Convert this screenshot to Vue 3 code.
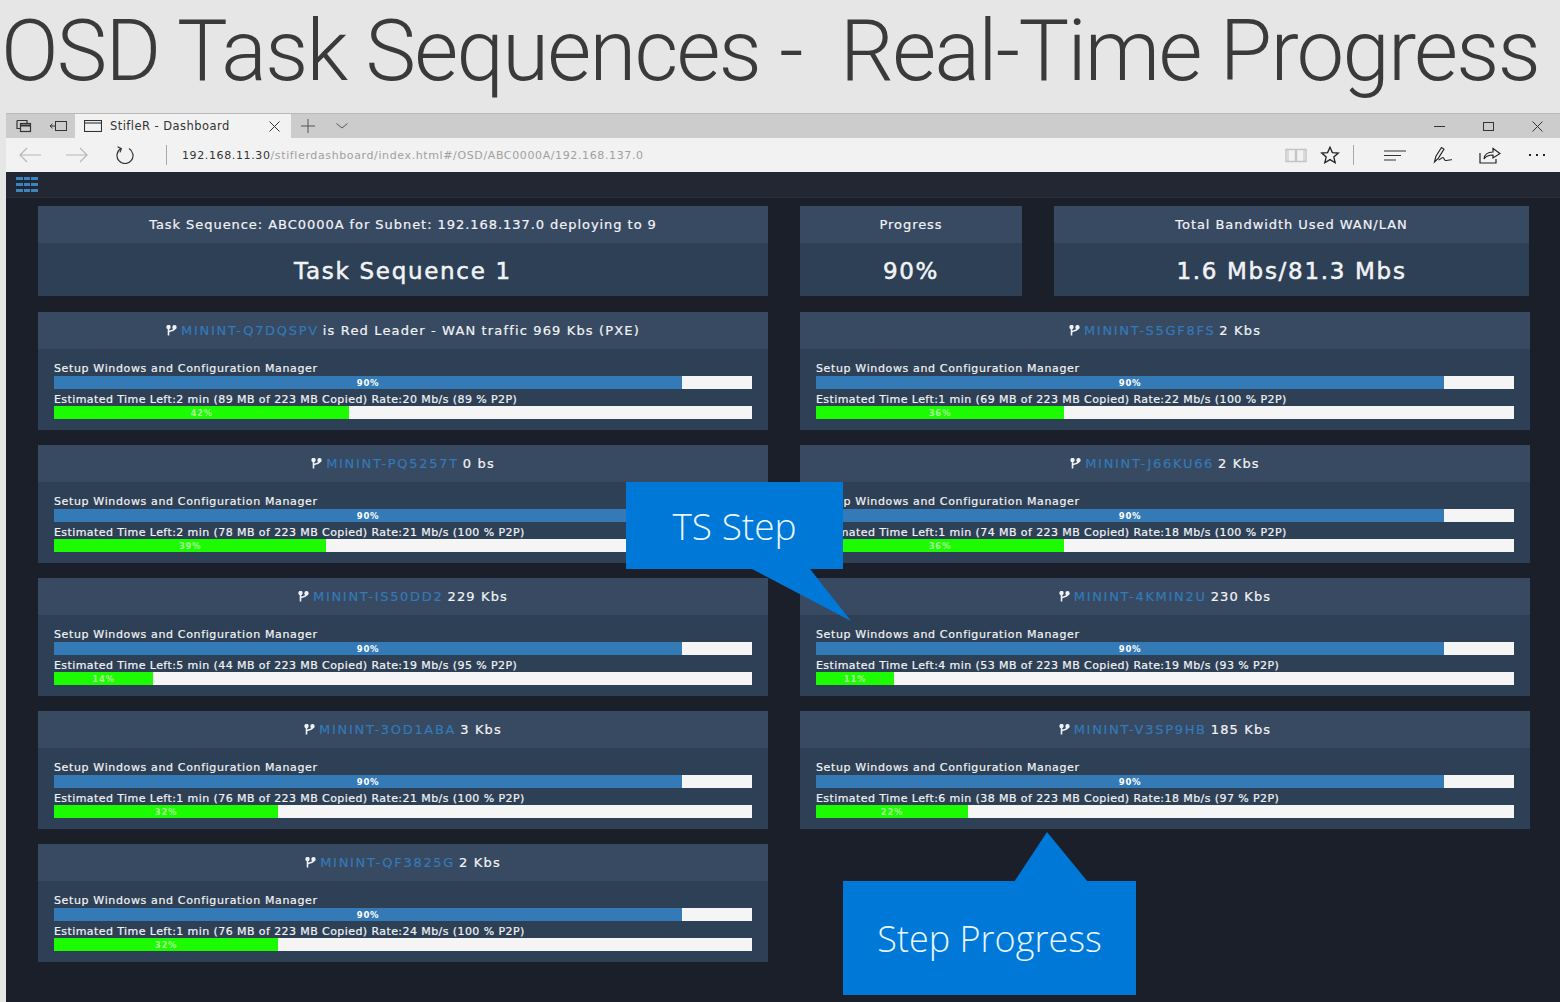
<template>
  <div class="slide">
    <h1 class="slide-title">OSD Task Sequences -&nbsp; Real-Time Progress</h1>

    <div class="browser">
      <div class="tabbar">
        <div class="tabbar-left">
          <svg class="tb-ic" width="16" height="14" viewBox="0 0 16 14" fill="none" stroke="#333" stroke-width="1.2">
            <path d="M1 1.500h10v3M1 1.500v8h3" />
            <rect x="4.500" y="4.500" width="10" height="8" />
            <path d="M4.500 6.500h10" stroke-width="2" />
          </svg>
          <svg class="tb-ic" width="18" height="12" viewBox="0 0 18 12" fill="none" stroke="#333" stroke-width="1">
            <rect x="6.500" y="1.500" width="11" height="9" />
            <path d="M6 6H1M3.500 3.800 1 6l2.500 2.200" />
          </svg>
        </div>
        <div class="tab">
          <svg width="18" height="12" viewBox="0 0 18 12" fill="none" stroke="#333" stroke-width="1.1">
            <rect x="0.500" y="0.500" width="17" height="11" />
            <path d="M0.500 3h17" />
          </svg>
          <span class="tab-title">StifleR - Dashboard</span>
          <svg class="tab-close" width="11" height="11" viewBox="0 0 11 11" stroke="#333" stroke-width="1">
            <path d="M0.500 0.500l10 10M10.500 0.500l-10 10" />
          </svg>
        </div>
        <svg class="tab-plus" width="14" height="14" viewBox="0 0 14 14" stroke="#555" stroke-width="1">
          <path d="M7 0v14M0 7h14" />
        </svg>
        <svg class="tab-more" width="12" height="6" viewBox="0 0 12 6" fill="none" stroke="#555" stroke-width="1">
          <path d="M0.500 0.500 6 5l5.500-4.500" />
        </svg>
        <div class="win-btns">
          <svg width="11" height="11" viewBox="0 0 11 11" stroke="#333" stroke-width="1"><path d="M0 5.500h11" /></svg>
          <svg width="11" height="11" viewBox="0 0 11 11" fill="none" stroke="#333" stroke-width="1"><rect x="0.500" y="1.500" width="10" height="8" /></svg>
          <svg width="11" height="11" viewBox="0 0 11 11" stroke="#333" stroke-width="1"><path d="M0.500 0.500l10 10M10.500 0.500l-10 10" /></svg>
        </div>
      </div>

      <div class="toolbar">
        <svg class="nav-back" width="22" height="16" viewBox="0 0 22 16" fill="none" stroke="#b5b5b5" stroke-width="1.1">
          <path d="M22 8H1M8 1 1 8l7 7" />
        </svg>
        <svg class="nav-fwd" width="22" height="16" viewBox="0 0 22 16" fill="none" stroke="#b5b5b5" stroke-width="1.1">
          <path d="M0 8h21M14 1l7 7-7 7" />
        </svg>
        <svg class="nav-reload" width="22" height="18" viewBox="0 0 22 18" fill="none" stroke="#333" stroke-width="1.2">
          <path d="M7 2.600A8 8 0 1 0 15 2.600" />
          <path d="M3.500 0.800 7.400 2.600 6 6.400" />
        </svg>
        <div class="nav-sep"></div>
        <div class="address"><b>192.168.11.30</b><span>/stiflerdashboard/index.html#/OSD/ABC0000A/192.168.137.0</span></div>
        <div class="tools">
          <svg class="t-book" width="22" height="15" viewBox="0 0 22 15" fill="none" stroke="#c4c4c4" stroke-width="1.4">
            <path d="M1 1.500h9.500v12H1zM11.500 1.500H21v12h-9.500z" />
            <path d="M3 1v13M19 1v13" stroke-width="1" />
          </svg>
          <svg class="t-star" width="20" height="18" viewBox="0 0 20 18" fill="none" stroke="#222" stroke-width="1.300">
            <path d="M10 1.200l2.400 5.400 5.900.5-4.500 3.800 1.400 5.800L10 13.600l-5.200 3.100 1.400-5.800-4.500-3.800 5.900-.5z" />
          </svg>
          <div class="t-sep"></div>
          <svg class="t-hub" width="22" height="11" viewBox="0 0 22 11" stroke="#333" stroke-width="1">
            <path d="M0 1h22M0 5.500h17M0 10h12" />
          </svg>
          <svg class="t-note" width="20" height="18" viewBox="0 0 20 18" fill="none" stroke="#222" stroke-width="1.100">
            <path d="M1.500 16 2.800 10.500 8.500 1.500l2.500 1.600-5.600 9z" />
            <path d="M5.500 14c2-.5 3-2.500 4.500-2.500 1.200 0 .8 3 2.600 3 1.800 0 3-1 6.400-.8" />
          </svg>
          <svg class="t-share" width="22" height="18" viewBox="0 0 22 18" fill="none" stroke="#222" stroke-width="1.200">
            <path d="M1 7v10h16v-4" />
            <path d="M5 13c.5-4.500 4-7 9-7V2.500L21 7.500 14 12V9c-4 0-7 1-9 4z" />
          </svg>
          <div class="t-dots"><i></i><i></i><i></i></div>
        </div>
      </div>

      <div class="appbar">
        <div class="app-grid"><i v-for="n in 9" :key="n"></i></div>
      </div>

      <div class="content">
        <div class="summary">
          <div v-for="s in summary" :key="s.head" class="panel sum-panel" :class="s.cls">
            <div class="sum-head">{{ s.head }}</div>
            <div class="sum-value">{{ s.value }}</div>
          </div>
        </div>

        <div class="clients">
          <div v-for="c in clients" :key="c.name" class="panel client">
            <div class="client-head">
              <svg class="fork" width="11" height="11" viewBox="0 0 11 11" fill="none" stroke="#eef2f6" stroke-width="1.600">
                <path d="M2.500 2v8.500M2.500 7.500c0-2.500 6-1 6-4" />
                <circle cx="2.500" cy="2" r="1.400" fill="#eef2f6" />
                <circle cx="8.500" cy="2.200" r="1.400" fill="#eef2f6" />
              </svg>
              <span class="client-name">{{ c.name }}</span>
              <span>{{ c.note }}</span>
            </div>
            <div class="client-body">
              <div class="bar-label">Setup Windows and Configuration Manager</div>
              <div class="bar">
                <div class="fill fill-blue" style="width: 90%">90%</div>
              </div>
              <div class="bar-label label-2">{{ c.status }}</div>
              <div class="bar">
                <div class="fill fill-green" :style="{ width: c.fill + '%' }">{{ c.pct }}%</div>
              </div>
            </div>
          </div>
        </div>
      </div>
    </div>

    <div class="callout callout-ts">
      <span>TS Step</span>
      <svg class="tail-ts" width="100" height="52" viewBox="0 0 100 52"><path d="M0 0H58L99 52z" fill="#0078d7" /></svg>
    </div>
    <div class="callout callout-step">
      <span>Step Progress</span>
      <svg class="tail-step" width="74" height="50" viewBox="0 0 74 50"><path d="M0 50 33 0l41 50z" fill="#0078d7" /></svg>
    </div>
  </div>
</template>

<script setup>
const summary = [
  { head: 'Task Sequence: ABC0000A for Subnet: 192.168.137.0 deploying to 9', value: 'Task Sequence 1', cls: 'sum-main' },
  { head: 'Progress', value: '90%', cls: 'sum-progress' },
  { head: 'Total Bandwidth Used WAN/LAN', value: '1.6 Mbs/81.3 Mbs', cls: 'sum-band' }
]

const clients = [
  { name: 'MININT-Q7DQSPV', note: 'is Red Leader - WAN traffic 969 Kbs (PXE)', pct: 42, fill: 42.3, status: 'Estimated Time Left:2 min (89 MB of 223 MB Copied) Rate:20 Mb/s (89 % P2P)' },
  { name: 'MININT-S5GF8FS', note: '2 Kbs', pct: 36, fill: 35.5, status: 'Estimated Time Left:1 min (69 MB of 223 MB Copied) Rate:22 Mb/s (100 % P2P)' },
  { name: 'MININT-PQ5257T', note: '0 bs', pct: 39, fill: 39, status: 'Estimated Time Left:2 min (78 MB of 223 MB Copied) Rate:21 Mb/s (100 % P2P)' },
  { name: 'MININT-J66KU66', note: '2 Kbs', pct: 36, fill: 35.5, status: 'Estimated Time Left:1 min (74 MB of 223 MB Copied) Rate:18 Mb/s (100 % P2P)' },
  { name: 'MININT-IS50DD2', note: '229 Kbs', pct: 14, fill: 14.2, status: 'Estimated Time Left:5 min (44 MB of 223 MB Copied) Rate:19 Mb/s (95 % P2P)' },
  { name: 'MININT-4KMIN2U', note: '230 Kbs', pct: 11, fill: 11.2, status: 'Estimated Time Left:4 min (53 MB of 223 MB Copied) Rate:19 Mb/s (93 % P2P)' },
  { name: 'MININT-3OD1ABA', note: '3 Kbs', pct: 32, fill: 32.1, status: 'Estimated Time Left:1 min (76 MB of 223 MB Copied) Rate:21 Mb/s (100 % P2P)' },
  { name: 'MININT-V3SP9HB', note: '185 Kbs', pct: 22, fill: 21.8, status: 'Estimated Time Left:6 min (38 MB of 223 MB Copied) Rate:18 Mb/s (97 % P2P)' },
  { name: 'MININT-QF3825G', note: '2 Kbs', pct: 32, fill: 32.1, status: 'Estimated Time Left:1 min (76 MB of 223 MB Copied) Rate:24 Mb/s (100 % P2P)' }
]
</script>

<style>
html,
body {
  margin: 0;
  background: #e6e6e6;
}
</style>

<style scoped>
.slide {
  position: relative;
  width: 1560px;
  height: 1002px;
  overflow: hidden;
  background: #e6e6e6;
  font-family: "DejaVu Sans", sans-serif;
}

.slide-title {
  margin: 0;
  height: 113px;
  font-family: Roboto, sans-serif;
  font-weight: 300;
  font-size: 85px;
  line-height: 102px;
  letter-spacing: -1.700px;
  color: #3a3a3a;
  white-space: nowrap;
  padding-left: 1px;
}

.browser {
  margin-left: 6px;
  height: 889px;
  display: flex;
  flex-direction: column;
}

.tabbar {
  height: 25px;
  flex: none;
  display: flex;
  align-items: center;
  background: #cccccc;
  border-top: 1px solid #b9b9b9;
  box-sizing: border-box;
}

.tabbar-left {
  display: flex;
  align-items: center;
  gap: 17px;
  padding-left: 10px;
  width: 69px;
  box-sizing: border-box;
}

.tab {
  width: 216px;
  height: 24px;
  background: #f2f2f2;
  display: flex;
  align-items: center;
  padding-left: 9px;
  box-sizing: border-box;
  font-size: 11.500px;
  letter-spacing: 0.450px;
  color: #333;
}

.tab-title {
  margin-left: 8px;
}

.tab-close {
  margin-left: auto;
  margin-right: 11px;
}

.tab-plus {
  margin-left: 10px;
}

.tab-more {
  margin-left: 21px;
}

.win-btns {
  margin-left: auto;
  display: flex;
  gap: 38px;
  padding-right: 17px;
}

.toolbar {
  height: 34px;
  flex: none;
  display: flex;
  align-items: center;
  background: #f2f2f2;
}

.nav-back {
  margin-left: 13px;
}

.nav-fwd {
  margin-left: 25px;
}

.nav-reload {
  margin-left: 26px;
}

.nav-sep {
  width: 1px;
  height: 20px;
  background: #a8a8a8;
  margin-left: 30px;
}

.address {
  margin-left: 15px;
  font-size: 11px;
  letter-spacing: 0.620px;
  color: #a0a0a0;
  white-space: nowrap;
}

.address b {
  font-weight: 400;
  color: #333;
}

.tools {
  margin-left: auto;
  display: flex;
  align-items: center;
  padding-right: 15px;
}

.t-star {
  margin-left: 13px;
}

.t-sep {
  width: 1px;
  height: 20px;
  background: #a8a8a8;
  margin-left: 13px;
}

.t-hub {
  margin-left: 30px;
}

.t-note {
  margin-left: 27px;
}

.t-share {
  margin-left: 26px;
}

.t-dots {
  display: flex;
  gap: 5px;
  margin-left: 28px;
}

.t-dots i {
  width: 2px;
  height: 2px;
  background: #222;
}

.appbar {
  height: 26px;
  flex: none;
  background: #222733;
  border-bottom: 1px solid #2a2f3a;
  box-sizing: border-box;
  display: flex;
  align-items: center;
  padding-left: 10px;
}

.app-grid {
  display: grid;
  grid-template-columns: repeat(3, 6.500px);
  grid-auto-rows: 3px;
  gap: 3px 1px;
}

.app-grid i {
  background: #3c84c0;
}

.content {
  flex: 1;
  background: #1a1f29;
  padding: 8px 30px 0 32px;
  color: #f1f3f5;
  -webkit-text-stroke: 0.200px currentColor;
}

.panel {
  background: #2e4056;
}

.summary {
  display: flex;
  gap: 32px;
}

.sum-main {
  width: 730px;
}

.sum-progress {
  width: 222px;
}

.sum-band {
  width: 475px;
}

.sum-panel {
  height: 90px;
  text-align: center;
}

.sum-head {
  height: 38px;
  line-height: 38px;
  background: #384962;
  border-bottom: 1px solid #2d3e55;
  box-sizing: border-box;
  font-size: 13px;
  letter-spacing: 0.950px;
  white-space: nowrap;
}

.sum-value {
  height: 52px;
  line-height: 54px;
  font-size: 23px;
  letter-spacing: 1.700px;
  -webkit-text-stroke: 0.500px currentColor;
}

.clients {
  margin-top: 16px;
  display: grid;
  grid-template-columns: 730px 730px;
  column-gap: 32px;
  row-gap: 15px;
}

.client {
  height: 118px;
}

.client-head {
  height: 38px;
  background: #384962;
  border-bottom: 1px solid #2d3e55;
  box-sizing: border-box;
  display: flex;
  align-items: center;
  justify-content: center;
  gap: 4px;
  font-size: 13px;
  letter-spacing: 1.150px;
  white-space: nowrap;
}

.client-name {
  color: #337ab7;
  letter-spacing: 1.700px;
}

.fork {
  margin-top: -1px;
}

.client-body {
  padding: 12px 16px 0;
}

.bar-label {
  height: 14px;
  line-height: 13px;
  font-size: 11px;
  letter-spacing: 0.640px;
  white-space: nowrap;
}

.label-2 {
  height: 17px;
  line-height: 21px;
  letter-spacing: 0.420px;
}

.bar {
  height: 13px;
  background: #f5f5f5;
}

.fill {
  height: 100%;
  text-align: center;
  font-size: 8.500px;
  font-weight: 700;
  letter-spacing: 0.700px;
  line-height: 15px;
  color: #fff;
  -webkit-text-stroke: 0;
}

.fill-blue {
  background: #337ab7;
}

.fill-green {
  background: #1cfb00;
  color: #a8f59a;
}

.callout {
  position: absolute;
  background: #0078d7;
  color: #e8f6ff;
  display: flex;
  align-items: center;
  justify-content: center;
  font-family: "Open Sans", sans-serif;
  font-weight: 300;
}

.callout-ts {
  left: 626px;
  top: 482px;
  width: 217px;
  height: 87px;
  font-size: 37px;
}

.tail-ts {
  position: absolute;
  left: 126px;
  top: 87px;
}

.callout-step {
  left: 843px;
  top: 881px;
  width: 293px;
  height: 114px;
  font-size: 36px;
}

.tail-step {
  position: absolute;
  left: 171px;
  top: -49px;
}
</style>
